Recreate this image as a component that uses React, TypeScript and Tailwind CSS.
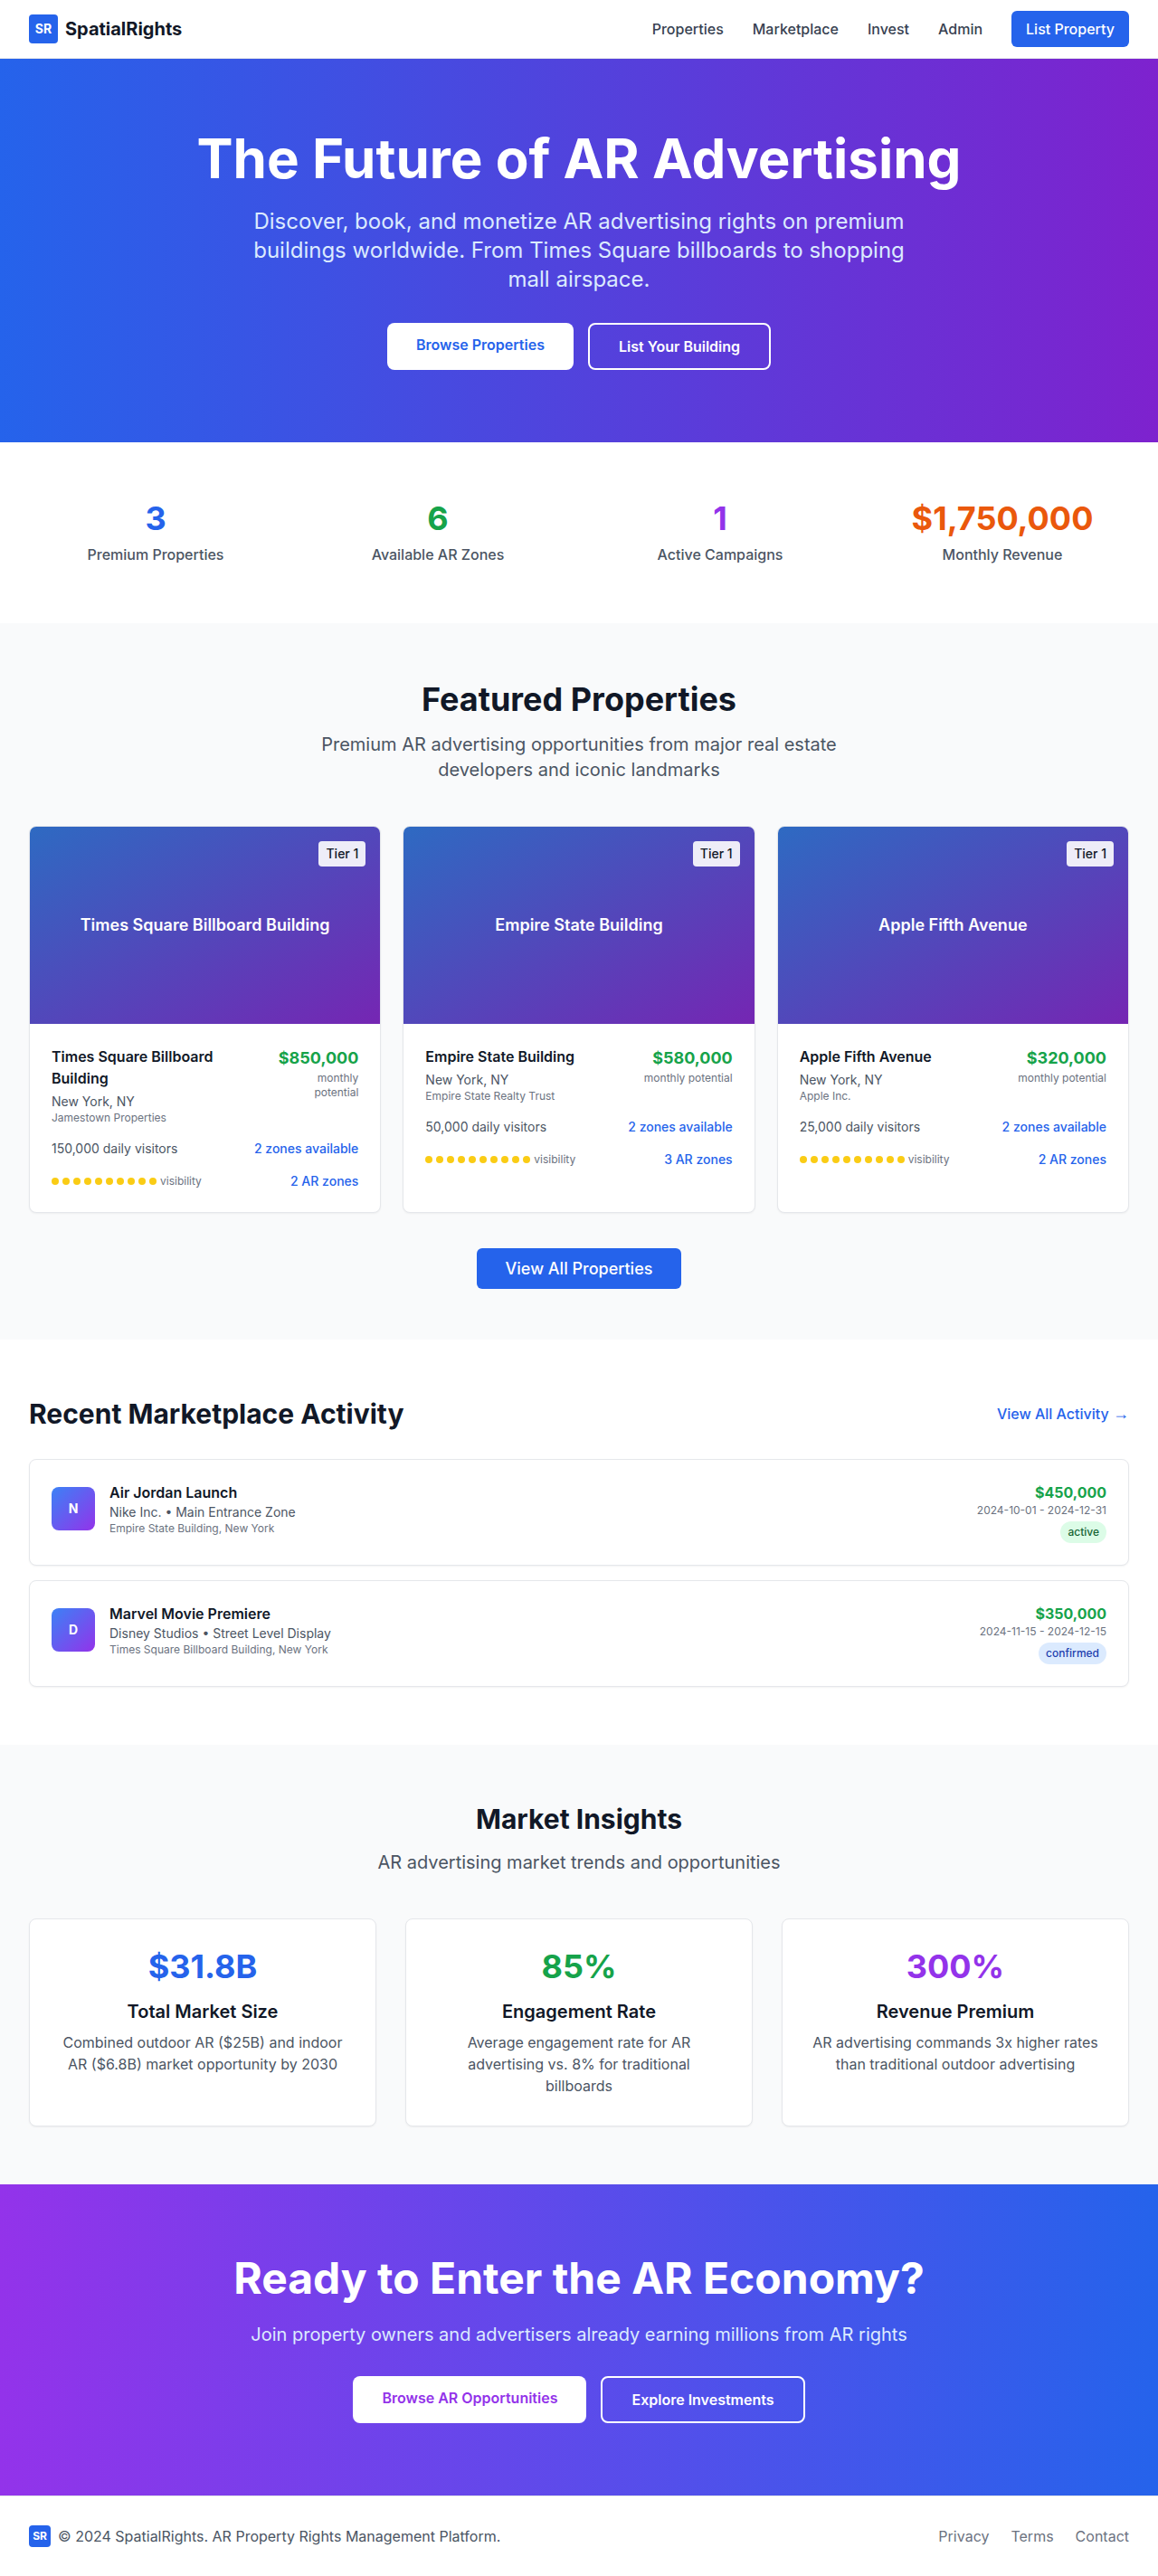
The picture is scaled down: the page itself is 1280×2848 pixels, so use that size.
import React from "react";

const properties = [
  { name: "Times Square Billboard Building", city: "New York, NY", owner: "Jamestown Properties", price: "$850,000", visitors: "150,000 daily visitors", zones: "2 zones available", ar: "2 AR zones" },
  { name: "Empire State Building", city: "New York, NY", owner: "Empire State Realty Trust", price: "$580,000", visitors: "50,000 daily visitors", zones: "2 zones available", ar: "3 AR zones" },
  { name: "Apple Fifth Avenue", city: "New York, NY", owner: "Apple Inc.", price: "$320,000", visitors: "25,000 daily visitors", zones: "2 zones available", ar: "2 AR zones" },
];

const stats = [
  { value: "3", label: "Premium Properties", color: "text-[#2563eb]" },
  { value: "6", label: "Available AR Zones", color: "text-[#16a34a]" },
  { value: "1", label: "Active Campaigns", color: "text-[#9333ea]" },
  { value: "$1,750,000", label: "Monthly Revenue", color: "text-[#ea580c]" },
];

const activity = [
  { letter: "N", title: "Air Jordan Launch", sub: "Nike Inc. • Main Entrance Zone", place: "Empire State Building, New York", price: "$450,000", dates: "2024-10-01 - 2024-12-31", status: "active", badge: "bg-[#dcfce7] text-[#166534]" },
  { letter: "D", title: "Marvel Movie Premiere", sub: "Disney Studios • Street Level Display", place: "Times Square Billboard Building, New York", price: "$350,000", dates: "2024-11-15 - 2024-12-15", status: "confirmed", badge: "bg-[#dbeafe] text-[#1e40af]" },
];

const insights = [
  { value: "$31.8B", color: "text-[#2563eb]", title: "Total Market Size", text: "Combined outdoor AR ($25B) and indoor AR ($6.8B) market opportunity by 2030" },
  { value: "85%", color: "text-[#16a34a]", title: "Engagement Rate", text: "Average engagement rate for AR advertising vs. 8% for traditional billboards" },
  { value: "300%", color: "text-[#9333ea]", title: "Revenue Premium", text: "AR advertising commands 3x higher rates than traditional outdoor advertising" },
];

function PropertyCard({ p }: { p: (typeof properties)[number] }) {
  return (
    <div className="bg-white rounded-lg border border-[#e5e7eb] shadow-xs overflow-hidden">
      <div className="relative h-[218px] bg-[linear-gradient(to_bottom_right,#2e6ac2,#7526b3)] flex items-center justify-center">
        <h3 className="text-white text-lg font-semibold">{p.name}</h3>
        <span className="absolute top-4 right-4 bg-white/90 rounded px-2 py-1 text-sm font-medium text-[#111827]">Tier 1</span>
      </div>
      <div className="p-6">
        <div className="flex justify-between items-start mb-4">
          <div>
            <h4 className="font-semibold text-[#111827] mb-1">{p.name}</h4>
            <p className="text-sm text-[#4b5563]">{p.city}</p>
            <p className="text-xs text-[#6b7280]">{p.owner}</p>
          </div>
          <div className="text-right">
            <div className="text-lg font-bold text-[#16a34a]">{p.price}</div>
            <div className="text-xs text-[#6b7280]">monthly potential</div>
          </div>
        </div>
        <div className="flex justify-between items-center text-sm mb-4">
          <span className="text-[#4b5563]">{p.visitors}</span>
          <span className="text-[#2563eb] font-medium">{p.zones}</span>
        </div>
        <div className="flex justify-between items-center text-sm">
          <div className="flex items-center">
            <div className="flex gap-1">
              {Array.from({ length: 10 }).map((_, i) => (
                <span key={i} className="w-2 h-2 rounded-full bg-[#facc15]"></span>
              ))}
            </div>
            <span className="text-xs text-[#6b7280] ml-1">visibility</span>
          </div>
          <span className="text-[#2563eb] font-medium">{p.ar}</span>
        </div>
      </div>
    </div>
  );
}

function Logo({ small }: { small?: boolean }) {
  return (
    <div className={small ? "w-6 h-6 rounded bg-[#2563eb] flex items-center justify-center text-white text-xs font-bold" : "w-8 h-8 rounded bg-[#2563eb] flex items-center justify-center text-white text-sm font-bold"}>
      SR
    </div>
  );
}

export default function App() {
  return (
    <div className="bg-white font-['Inter',sans-serif] text-[#111827]">
      <nav className="h-[65px] border-b border-[#e5e7eb] bg-white px-8 flex items-center justify-between">
        <div className="flex items-center gap-2">
          <Logo />
          <span className="text-xl font-bold">SpatialRights</span>
        </div>
        <div className="flex items-center gap-8 text-base font-medium text-[#374151]">
          <span>Properties</span>
          <span>Marketplace</span>
          <span>Invest</span>
          <span>Admin</span>
          <button className="bg-[#2563eb] text-white rounded-md px-4 py-2 font-medium">List Property</button>
        </div>
      </nav>

      <section className="bg-[linear-gradient(to_right,#2563eb,#7e22ce)] py-20 text-center text-white">
        <h1 className="text-6xl font-bold mb-6">The Future of AR Advertising</h1>
        <p className="text-2xl text-[#dbeafe] max-w-3xl mx-auto mb-8">
          Discover, book, and monetize AR advertising rights on premium buildings worldwide. From Times Square billboards to shopping mall airspace.
        </p>
        {/* links stretch to the taller outlined one, so the white label sits a little high */}
        <div className="flex justify-center gap-4">
          <a className="bg-white text-[#2563eb] rounded-lg px-8 py-3 font-semibold">Browse Properties</a>
          <a className="border-2 border-white text-white rounded-lg px-8 py-3 font-semibold">List Your Building</a>
        </div>
      </section>

      <section className="bg-white py-16 px-8">
        <div className="grid grid-cols-4 gap-8 text-center">
          {stats.map((s) => (
            <div key={s.label}>
              <div className={`text-4xl font-bold mb-2 ${s.color}`}>{s.value}</div>
              <div className="font-medium text-[#4b5563]">{s.label}</div>
            </div>
          ))}
        </div>
      </section>

      <section className="bg-[#f9fafb] py-16 px-8">
        <div className="text-center mb-12">
          <h2 className="text-4xl font-bold mb-4">Featured Properties</h2>
          <p className="text-xl text-[#4b5563] max-w-2xl mx-auto">Premium AR advertising opportunities from major real estate developers and iconic landmarks</p>
        </div>
        <div className="grid grid-cols-3 gap-6">
          {properties.map((p) => (
            <PropertyCard key={p.name} p={p} />
          ))}
        </div>
        <div className="text-center mt-12">
          <a className="bg-[#2563eb] text-white rounded-md px-8 py-3 text-lg font-medium">View All Properties</a>
        </div>
      </section>

      <section className="bg-white py-16 px-8">
        <div className="flex justify-between items-center mb-8">
          <h2 className="text-3xl font-bold">Recent Marketplace Activity</h2>
          <span className="text-[#2563eb] font-medium">
            View All Activity <span className="font-['Liberation_Sans'] text-[18px]">→</span>
          </span>
        </div>
        <div className="flex flex-col gap-4">
          {activity.map((a) => (
            <div key={a.title} className="border border-[#e5e7eb] rounded-lg shadow-xs p-6 flex justify-between items-start bg-white">
              <div className="flex items-center gap-4">
                <div className="w-12 h-12 rounded-lg bg-[linear-gradient(to_bottom_right,#3b82f6,#9333ea)] flex items-center justify-center text-white font-bold text-sm">{a.letter}</div>
                <div>
                  <div className="font-semibold text-[#111827]">{a.title}</div>
                  <div className="text-sm text-[#4b5563]">{a.sub}</div>
                  <div className="text-xs text-[#6b7280]">{a.place}</div>
                </div>
              </div>
              <div className="text-right">
                <div className="font-bold text-[#16a34a]">{a.price}</div>
                <div className="text-xs text-[#6b7280]">{a.dates}</div>
                <span className={`inline-block mt-1 rounded-full px-2 py-1 text-xs font-medium ${a.badge}`}>{a.status}</span>
              </div>
            </div>
          ))}
        </div>
      </section>

      <section className="bg-[#f9fafb] py-16 px-8">
        <div className="text-center mb-12">
          <h2 className="text-3xl font-bold mb-4">Market Insights</h2>
          <p className="text-xl text-[#4b5563]">AR advertising market trends and opportunities</p>
        </div>
        <div className="grid grid-cols-3 gap-8">
          {insights.map((c) => (
            <div key={c.title} className="bg-white border border-[#e5e7eb] rounded-lg shadow-xs p-8 text-center">
              <div className={`text-4xl font-bold mb-4 ${c.color}`}>{c.value}</div>
              <h3 className="text-xl font-semibold mb-2">{c.title}</h3>
              <p className="text-[#4b5563]">{c.text}</p>
            </div>
          ))}
        </div>
      </section>

      <section className="bg-[linear-gradient(to_right,#9333ea,#2563eb)] py-20 text-center text-white">
        <h2 className="text-5xl font-bold mb-6">Ready to Enter the AR Economy?</h2>
        <p className="text-xl text-[#dbeafe] mb-8">Join property owners and advertisers already earning millions from AR rights</p>
        <div className="flex justify-center gap-4">
          <a className="bg-white text-[#9333ea] rounded-lg px-8 py-3 font-semibold">Browse AR Opportunities</a>
          <a className="border-2 border-white text-white rounded-lg px-8 py-3 font-semibold">Explore Investments</a>
        </div>
      </section>

      <footer className="border-t border-[#e5e7eb] bg-white px-8 py-8 flex items-center justify-between">
        <div className="flex items-center gap-2">
          <Logo small />
          <span className="text-[#4b5563]">© 2024 SpatialRights. AR Property Rights Management Platform.</span>
        </div>
        <div className="flex gap-6 text-[#6b7280]">
          <span>Privacy</span>
          <span>Terms</span>
          <span>Contact</span>
        </div>
      </footer>
    </div>
  );
}
